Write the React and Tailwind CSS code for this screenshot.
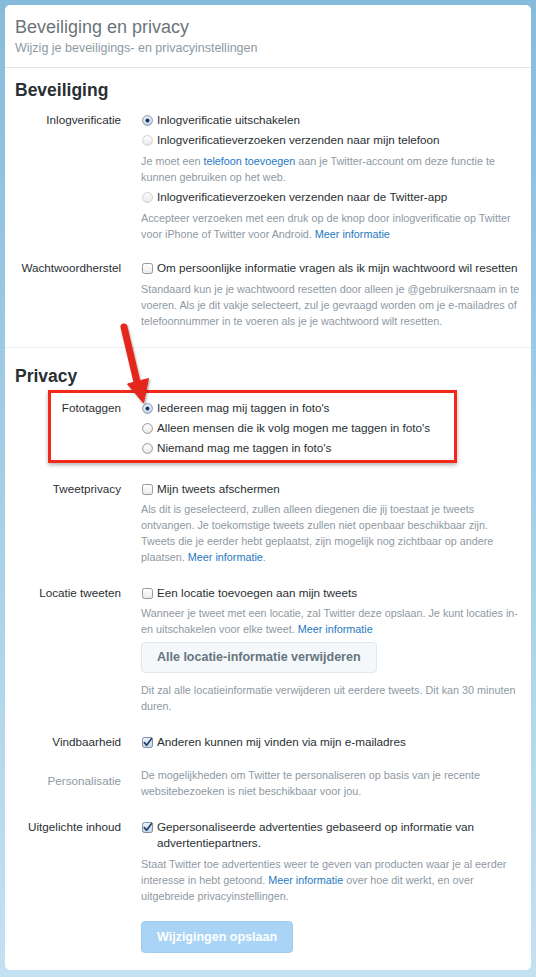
import clsx from "clsx";

function Radio({ checked, faded }) {
  return (
    <svg width="11" height="11" viewBox="0 0 11 11" className="shrink-0 mt-[2.5px]">
      <defs>
        <linearGradient id="rg" x1="0" y1="0" x2="0" y2="1">
          <stop offset="0" stopColor="#ffffff" />
          <stop offset="1" stopColor="#e9e9e9" />
        </linearGradient>
        <linearGradient id="rgc" x1="0" y1="0" x2="0" y2="1">
          <stop offset="0" stopColor="#eef4fb" />
          <stop offset="1" stopColor="#c9d9ec" />
        </linearGradient>
      </defs>
      <circle
        cx="5.5"
        cy="5.5"
        r="4.9"
        fill={checked ? "url(#rgc)" : "url(#rg)"}
        stroke={checked ? "#7488a0" : faded ? "#c9c9c9" : "#8c8c8c"}
        strokeWidth="0.9"
      />
      {checked && <circle cx="5.5" cy="5.5" r="2" fill="#1c355c" />}
    </svg>
  );
}

function Checkbox({ checked }) {
  return (
    <svg width="11" height="11" viewBox="0 0 11 11" className="shrink-0 mt-[3px]">
      <defs>
        <linearGradient id="cg" x1="0" y1="0" x2="0" y2="1">
          <stop offset="0" stopColor="#ffffff" />
          <stop offset="1" stopColor="#ebebeb" />
        </linearGradient>
        <linearGradient id="cgc" x1="0" y1="0" x2="0" y2="1">
          <stop offset="0" stopColor="#eef4fb" />
          <stop offset="1" stopColor="#c3d5ea" />
        </linearGradient>
      </defs>
      <rect
        x="0.5"
        y="0.5"
        width="10"
        height="10"
        rx="2"
        fill={checked ? "url(#cgc)" : "url(#cg)"}
        stroke={checked ? "#6f8299" : "#8c8c8c"}
        strokeWidth="0.9"
      />
      {checked && (
        <path d="M2.4 5.6 L4.6 8.2 L9.6 1.4" fill="none" stroke="#23426b" strokeWidth="1.7" strokeLinecap="round" strokeLinejoin="round" />
      )}
    </svg>
  );
}

function Option({ type = "radio", checked, faded, children, className }) {
  return (
    <label className={clsx("flex items-start gap-[4px] pl-[1px] py-[2px] text-[11.7px] leading-[16px] text-[#292f33]", className)}>
      {type === "radio" ? <Radio checked={checked} faded={faded} /> : <Checkbox checked={checked} />}
      <span>{children}</span>
    </label>
  );
}

function Help({ children, className }) {
  return (
    <p className={clsx("whitespace-nowrap text-[10.8px] leading-[16px] text-[#8e99a3]", className)}>{children}</p>
  );
}

function A({ children }) {
  return <a className="text-[#1f79bf]">{children}</a>;
}

function Row({ label, muted, className, children }) {
  return (
    <div className={clsx("relative flex", className)}>
      <div
        className={clsx(
          "w-[116px] shrink-0 text-right text-[11.7px] leading-[16px]",
          muted ? "pt-[6px] text-[#8e99a3]" : "py-[2px] text-[#292f33]"
        )}
      >
        {label}
      </div>
      <div className="ml-[20px] w-[380px]">{children}</div>
    </div>
  );
}

function Heading({ children, className }) {
  return (
    <h3 className={clsx("px-[10px] text-[17.5px] font-bold leading-[24px] text-[#292f33]", className)}>{children}</h3>
  );
}

export default function App() {
  return (
    <div className="relative min-h-[977px] w-full bg-gradient-to-b from-[#86bcdb] to-[#c4e1f2] px-[5px] pt-[5px] pb-[7px] font-['Liberation_Sans','Arial',sans-serif]">
      <div className="rounded-[5px] bg-white">
        <div className="border-b border-[#e1e8ed] px-[10px] pt-[10px] pb-[11px]">
          <h2 className="text-[18px] leading-[24px] text-[#6b747b]">Beveiliging en privacy</h2>
          <p className="mt-[1px] text-[12.5px] leading-[16px] text-[#8e99a3]">Wijzig je beveiligings- en privacyinstellingen</p>
        </div>

        <div className="border-b border-[#e8edf0] pt-[10px] pb-[18px]">
          <Heading className="mb-[8px]">Beveiliging</Heading>

          <Row label="Inlogverificatie">
            <Option checked>Inlogverificatie uitschakelen</Option>
            <Option faded>Inlogverificatieverzoeken verzenden naar mijn telefoon</Option>
            <Help className="mt-[3px]">
              Je moet een <A>telefoon toevoegen</A> aan je Twitter-account om deze functie te
              <br />
              kunnen gebruiken op het web.
            </Help>
            <Option faded className="mt-[2px]">Inlogverificatieverzoeken verzenden naar de Twitter-app</Option>
            <Help className="mt-[3px]">
              Accepteer verzoeken met een druk op de knop door inlogverificatie op Twitter
              <br />
              voor iPhone of Twitter voor Android. <A>Meer informatie</A>
            </Help>
          </Row>

          <Row label="Wachtwoordherstel" className="mt-[16px]">
            <Option type="checkbox">Om persoonlijke informatie vragen als ik mijn wachtwoord wil resetten</Option>
            <Help className="mt-[3px]">
              Standaard kun je je wachtwoord resetten door alleen je @gebruikersnaam in te
              <br />
              voeren. Als je dit vakje selecteert, zul je gevraagd worden om je e-mailadres of
              <br />
              telefoonnummer in te voeren als je je wachtwoord wilt resetten.
            </Help>
          </Row>
        </div>

        <div className="pt-[16px] pb-[17px]">
          <Heading className="mb-[10px]">Privacy</Heading>

          <Row label="Fototaggen">
            <Option checked>Iedereen mag mij taggen in foto's</Option>
            <Option>Alleen mensen die ik volg mogen me taggen in foto's</Option>
            <Option>Niemand mag me taggen in foto's</Option>
            <div className="pointer-events-none absolute top-[-8px] bottom-[-5px] left-[43px] right-[74px] border-[3px] border-[#f2281b] shadow-[0_2px_4px_rgba(0,0,0,0.3)]" />
          </Row>

          <Row label="Tweetprivacy" className="mt-[21px]">
            <Option type="checkbox">Mijn tweets afschermen</Option>
            <Help className="mt-[2px]">
              Als dit is geselecteerd, zullen alleen diegenen die jij toestaat je tweets
              <br />
              ontvangen. Je toekomstige tweets zullen niet openbaar beschikbaar zijn.
              <br />
              Tweets die je eerder hebt geplaatst, zijn mogelijk nog zichtbaar op andere
              <br />
              plaatsen. <A>Meer informatie</A>.
            </Help>
          </Row>

          <Row label="Locatie tweeten" className="mt-[18px]">
            <Option type="checkbox">Een locatie toevoegen aan mijn tweets</Option>
            <Help className="mt-[2px]">
              Wanneer je tweet met een locatie, zal Twitter deze opslaan. Je kunt locaties in-
              <br />
              en uitschakelen voor elke tweet. <A>Meer informatie</A>
            </Help>
            <button className="mt-[5px] h-[31px] rounded-[4px] border border-[#e1e8ed] bg-[#f5f8fa] px-[15px] text-[12.5px] font-bold text-[#66757f]">
              Alle locatie-informatie verwijderen
            </button>
            <Help className="mt-[9px]">
              Dit zal alle locatieinformatie verwijderen uit eerdere tweets. Dit kan 30 minuten
              <br />
              duren.
            </Help>
          </Row>

          <Row label="Vindbaarheid" className="mt-[18px]">
            <Option type="checkbox" checked>Anderen kunnen mij vinden via mijn e-mailadres</Option>
          </Row>

          <Row label="Personalisatie" muted className="mt-[15px]">
            <Help>
              De mogelijkheden om Twitter te personaliseren op basis van je recente
              <br />
              websitebezoeken is niet beschikbaar voor jou.
            </Help>
          </Row>

          <Row label="Uitgelichte inhoud" className="mt-[18px]">
            <Option type="checkbox" checked>
              Gepersonaliseerde advertenties gebaseerd op informatie van
              <br />
              advertentiepartners.
            </Option>
            <Help className="mt-[3px]">
              Staat Twitter toe advertenties weer te geven van producten waar je al eerder
              <br />
              interesse in hebt getoond. <A>Meer informatie</A> over hoe dit werkt, en over
              <br />
              uitgebreide privacyinstellingen.
            </Help>
          </Row>

          <Row label="" className="mt-[17px]">
            <button className="h-[32px] rounded-[4px] border border-[#9fcbee] bg-[#a9d4f6] px-[15px] text-[12.5px] font-bold text-white">
              Wijzigingen opslaan
            </button>
          </Row>
        </div>
      </div>

      <svg className="pointer-events-none absolute top-0 left-0" width="536" height="977" viewBox="0 0 536 977">
        <defs>
          <filter id="ash" x="-50%" y="-20%" width="200%" height="140%">
            <feDropShadow dx="1" dy="1.5" stdDeviation="1.2" floodColor="#000" floodOpacity="0.35" />
          </filter>
        </defs>
        <g filter="url(#ash)" fill="#e5271b" stroke="#e5271b">
          <line x1="124" y1="327" x2="137" y2="382" strokeWidth="7" strokeLinecap="round" />
          <polygon points="148.5,378.5 127.5,384 143.5,403" strokeWidth="1" strokeLinejoin="round" />
        </g>
      </svg>
    </div>
  );
}
